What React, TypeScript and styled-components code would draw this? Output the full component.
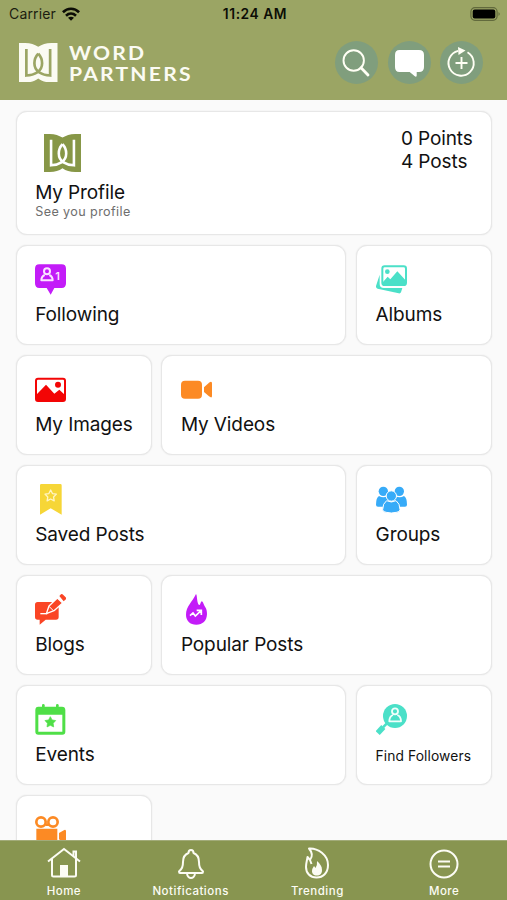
import React from "react";
import styled, { createGlobalStyle } from "styled-components";

const GlobalStyle = createGlobalStyle`
  * { box-sizing: border-box; }
  body { margin: 0; background: #fafafa; font-family: Inter, "Liberation Sans", sans-serif; }
`;

const Screen = styled.div`
  display: flex;
  flex-direction: column;
  width: 507px;
  height: 900px;
  overflow: hidden;
  background: #fafafa;
  color: #111;
`;

const Header = styled.header`
  flex: none;
  height: 99.5px;
  background: #9ba564;
`;

const StatusBar = styled.div`
  display: grid;
  grid-template-columns: 1fr auto 1fr;
  align-items: center;
  height: 27px;
  padding: 0 6px 0 9px;
`;

const Carrier = styled.div`
  display: flex;
  align-items: center;
  gap: 6px;
  font-size: 14px;
  letter-spacing: 0.15px;
  color: #1b1d10;
`;

const Clock = styled.div`
  font-size: 13.8px;
  font-weight: 600;
  letter-spacing: 0.55px;
  color: #0c0d06;
`;

const Battery = styled.svg`
  justify-self: end;
`;

const Toolbar = styled.div`
  display: flex;
  align-items: center;
  height: 71px;
  padding: 0 24px 0 19px;
`;

const Wordmark = styled.div`
  flex: 1;
  margin-left: 11px;
  color: #fbfbf3;
  font-family: Lato, sans-serif;
  font-size: 19px;
  font-weight: 700;
  line-height: 21px;
  letter-spacing: 2px;
  transform: scaleX(1.11);
  transform-origin: left;
`;

const Actions = styled.div`
  display: flex;
  gap: 9.5px;
`;

const RoundButton = styled.button`
  display: grid;
  place-items: center;
  width: 43px;
  height: 43px;
  padding: 0;
  border: 0;
  border-radius: 50%;
  background: #809e7d;
`;

const Content = styled.main`
  flex: 1;
  min-height: 0;
  overflow: hidden;
  display: grid;
  grid-template-columns: 136px 185px 136px;
  grid-template-rows: 124.5px;
  grid-auto-rows: 100px;
  column-gap: 9.7px;
  row-gap: 10px;
  padding: 11.2px 15px 0 15.5px;
`;

const Card = styled.section<{ $span?: number }>`
  grid-column: span ${(p) => p.$span ?? 1};
  display: flex;
  flex-direction: column;
  align-items: flex-start;
  padding: 18px 18.7px 0;
  border: 1px solid #e7e7e7;
  border-radius: 11px;
  box-shadow: 0 0 1.5px #e2e2e2;
  background: #fff;
`;

const Label = styled.div<{ $small?: boolean }>`
  margin-top: ${(p) => (p.$small ? "9px" : "7.5px")};
  font-size: ${(p) => (p.$small ? "13.8px" : "19px")};
  line-height: 24px;
  letter-spacing: ${(p) => (p.$small ? "0.1px" : "-0.1px")};
  white-space: nowrap;
`;

const ProfileCard = styled.section`
  grid-column: span 3;
  display: flex;
  justify-content: space-between;
  padding: 15px 18px 0 18.7px;
  border: 1px solid #e7e7e7;
  border-radius: 11px;
  box-shadow: 0 0 1.5px #e2e2e2;
  background: #fff;
`;

const Profile = styled.div`
  padding-top: 7.5px;
`;

const Avatar = styled.div`
  height: 39px;
  margin-left: 8.5px;
`;

const ProfileName = styled.div`
  margin-top: 7.5px;
  font-size: 19px;
  line-height: 24px;
  letter-spacing: -0.12px;
`;

const Hint = styled.div`
  margin-top: 0.5px;
  font-size: 12.6px;
  line-height: 14px;
  letter-spacing: 0.4px;
  color: #6e6e6e;
`;

const Stats = styled.div`
  width: 72px;
  font-size: 19px;
  line-height: 23.5px;
  letter-spacing: -0.1px;
  white-space: nowrap;
`;

const NavBar = styled.nav`
  flex: none;
  display: grid;
  grid-template-columns: repeat(4, 1fr);
  height: 60.3px;
  border-top: 1px solid #a2ab79;
  background: #889550;
`;

const NavItem = styled.a`
  display: flex;
  flex-direction: column;
  align-items: center;
  padding: 6px 0 0 1px;
  color: #fcfcf4;
  font-size: 11.5px;
  font-weight: 500;
  line-height: 14px;
  letter-spacing: 0.5px;

  svg { margin-bottom: 5px; }
`;

const Tile = styled.svg.attrs({ width: 31, height: 31, viewBox: "0 0 93 93" })`
  display: block;
  flex: none;
`;

const LogoSvg = styled.svg`
  display: block;
`;

const Logo = ({ fill, line, w, h }: { fill: string; line: string; w: number; h: number }) => (
  <LogoSvg width={w} height={h} viewBox="0 0 115 119" preserveAspectRatio="none">
    <path fill={fill} d="M0 0H18C35 0 46 5 57.500 11C69 5 80 0 97 0H115V119H97C80 119 69 115 57.500 107C46 115 35 119 18 119H0Z" />
    <g fill="none" stroke={line} strokeWidth="8">
      <path d="M22 18V98C45 97 69 87 69 61C69 48 63 38 57.500 32" />
      <path d="M93 18V98C70 97 46 87 46 61C46 48 52 38 57.500 32" />
    </g>
  </LogoSvg>
);

const star = (cx: number, cy: number, r: number, inner: number) =>
  Array.from({ length: 10 }, (_, i) => {
    const a = (Math.PI / 5) * i - Math.PI / 2;
    const d = i % 2 ? inner : r;
    return `${(cx + d * Math.cos(a)).toFixed(1)},${(cy + d * Math.sin(a)).toFixed(1)}`;
  }).join(" ");

const FollowingIcon = () => (
  <Tile>
    <path fill="#c31cf8" d="M13 1H80Q93 1 93 14V58Q93 72 80 72H58L47 92L35 72H13Q0 72 0 58V14Q0 1 13 1Z" />
    <g fill="none" stroke="#fbe4ff" strokeWidth="6">
      <circle cx="36" cy="22" r="9" />
      <path strokeLinejoin="round" d="M29 33C22 36 19 42 19 49H53C53 42 50 36 43 33" />
    </g>
    <text x="61" y="48" fill="#fbe4ff" fontFamily="Inter" fontWeight="600" fontSize="33">1</text>
  </Tile>
);

const AlbumsIcon = () => (
  <Tile>
    <path fill="#4be0c8" d="M11 32V60Q11 72 24 72H79L75 85Q73 89 68 88L5 74Q-1 72 0 66Z" />
    <rect x="19" y="7" width="71" height="56" rx="7" fill="#fff" stroke="#4be0c8" strokeWidth="6" />
    <circle cx="34" cy="23" r="7" fill="#4be0c8" />
    <path fill="#4be0c8" d="M21 54L35 38L43 46L64 22L88 48V62H21Z" />
  </Tile>
);

const ImagesIcon = () => (
  <Tile>
    <rect x="3" y="14" width="87" height="67" rx="6" fill="#fff" stroke="#f30505" strokeWidth="6" />
    <circle cx="69" cy="32" r="9" fill="#f30505" />
    <path fill="#f30505" d="M4 62L33 32L58 59L73 47L90 63V80H4Z" />
  </Tile>
);

const VideosIcon = () => (
  <Tile fill="#fc8a24">
    <rect y="20" width="63" height="54" rx="12" />
    <path d="M69 40L84 26Q93 20 93 28V66Q93 74 84 67L69 54Z" />
  </Tile>
);

const SavedIcon = () => (
  <Tile>
    <path fill="#f6d637" d="M19 0H76Q80 0 80 4V92L47 73L15 92V4Q15 0 19 0Z" />
    <polygon points={star(47, 36, 18, 9)} fill="none" stroke="#fff5c4" strokeWidth="4" strokeLinejoin="round" />
  </Tile>
);

const GroupsIcon = () => (
  <Tile fill="#37abf8">
    <circle cx="22" cy="22" r="14" />
    <circle cx="70" cy="22" r="14" />
    <path d="M9 36Q22 44 35 36Q43 42 41 53H29L22 68H6Q0 68 0 62Q0 41 9 36Z" />
    <path d="M84 36Q71 44 58 36Q50 42 52 53H64L71 68H87Q93 68 93 62Q93 41 84 36Z" />
    <g stroke="#fff" strokeWidth="3">
      <circle cx="46" cy="36" r="15.500" />
      <path d="M32 50Q46 58 60 50Q72 58 72 77Q72 84 61 85Q46 89 31 85Q20 84 20 77Q20 58 32 50Z" />
    </g>
  </Tile>
);

const BlogsIcon = () => (
  <Tile>
    <path fill="#fa4525" d="M8 24H64Q71 24 71 32V69Q71 77 63 77H32L14 92V77H8Q0 77 0 69V32Q0 24 8 24Z" />
    <path fill="none" stroke="#fff" strokeWidth="4" d="M16 59H37" />
    <path fill="#fa4525" stroke="#fff" strokeWidth="4" strokeLinejoin="round" d="M67 12L42 36L34 59L57 50L83 27Z" />
    <path fill="none" stroke="#fff" strokeWidth="3" d="M42 37L55 50" />
    <path fill="#fa4525" d="M73 6L78 1Q81 -1 85 3L92 10Q95 14 91 17L86 22Z" />
  </Tile>
);

const PopularIcon = () => (
  <Tile>
    <path fill="#c31cf8" d="M45 0C49 3 47 27 54 33C59 35 58 22 63 22C67 24 69 35 73 40C77 46 78 53 78 61C77 81 65 92 46 92C27 92 15 80 15 62C15 37 34 24 45 0Z" />
    <path fill="none" stroke="#fff" strokeWidth="5" d="M27 65L36 57L43 66L60 50M47 49H61V63" />
  </Tile>
);

const EventsIcon = () => (
  <Tile>
    <g fill="#4fdf47">
      <path fillRule="evenodd" d="M10 8H81Q91 8 91 18V83Q91 92 82 92H10Q1 92 1 83V18Q1 8 10 8ZM10 32V83H82V32Z" />
      <rect x="21" y="0" width="8" height="15" rx="4" />
      <rect x="63" y="0" width="8" height="15" rx="4" />
      <polygon points={star(46, 55, 17, 9)} stroke="#4fdf47" strokeWidth="2" strokeLinejoin="round" />
    </g>
  </Tile>
);

const FindIcon = () => (
  <Tile>
    <circle cx="57" cy="36" r="36" fill="#4be0c8" />
    <path d="M5 87L22 69" stroke="#4be0c8" strokeWidth="17" />
    <path d="M21 70L32 59" stroke="#4be0c8" strokeWidth="8" />
    <g fill="none" stroke="#f1fffc" strokeWidth="5.500">
      <circle cx="57" cy="22" r="9" />
      <path strokeLinejoin="round" d="M51 33C43 36 40 43 40 52H75C75 43 72 36 64 33" />
    </g>
  </Tile>
);

const MoviesIcon = () => (
  <Tile fill="#fc8a24">
    <g fill="none" stroke="#fc8a24" strokeWidth="8">
      <circle cx="18" cy="24" r="14" />
      <circle cx="54" cy="24" r="14" />
    </g>
    <path d="M31 28H42V36H31Z" />
    <path d="M4 44H67V93H4ZM72 57L88 48Q93 46 93 52V90L72 76Z" />
  </Tile>
);

const tiles: { label: string; span?: number; small?: boolean; Icon: React.FC }[] = [
  { label: "Following", span: 2, Icon: FollowingIcon },
  { label: "Albums", Icon: AlbumsIcon },
  { label: "My Images", Icon: ImagesIcon },
  { label: "My Videos", span: 2, Icon: VideosIcon },
  { label: "Saved Posts", span: 2, Icon: SavedIcon },
  { label: "Groups", Icon: GroupsIcon },
  { label: "Blogs", Icon: BlogsIcon },
  { label: "Popular Posts", span: 2, Icon: PopularIcon },
  { label: "Events", span: 2, Icon: EventsIcon },
  { label: "Find Followers", small: true, Icon: FindIcon },
  { label: "", Icon: MoviesIcon },
];

const NavSvg = styled.svg.attrs({ width: 34, height: 32, viewBox: "0 0 34 32", fill: "none", stroke: "currentColor", strokeWidth: 2 })``;

export default function App() {
  return (
    <Screen>
      <GlobalStyle />
      <Header>
        <StatusBar>
          <Carrier>
            Carrier
            <svg width="18" height="14" viewBox="0 0 18 14" fill="none" stroke="#0c0d06" strokeWidth="2.700">
              <path d="M0.900 5.200C5.500 0.600 12.500 0.600 17.100 5.200" />
              <path d="M4 8.700C7 6 11 6 14 8.700" />
              <path fill="#0c0d06" stroke="none" d="M6 10.800Q9 8.500 12 10.800L9 13.800Z" />
            </svg>
          </Carrier>
          <Clock>11:24 AM</Clock>
          <Battery width="31" height="14" viewBox="0 0 31 14">
            <rect x="0.900" y="0.700" width="26.200" height="12.600" rx="4" fill="none" stroke="#626a3d" strokeWidth="1.200" />
            <rect x="2.700" y="2.500" width="22.600" height="9" rx="2" fill="#000" />
            <path d="M28.500 5Q31 7 28.500 9Z" fill="#626a3d" />
          </Battery>
        </StatusBar>
        <Toolbar>
          <Logo fill="#fbfbf3" line="#9ba564" w={38.5} h={39.5} />
          <Wordmark>
            <div>WORD</div>
            <div>PARTNERS</div>
          </Wordmark>
          <Actions>
            <RoundButton aria-label="Search">
              <svg width="43" height="43" viewBox="0 0 43 43" fill="none" stroke="#fffff5">
                <circle cx="18.700" cy="19.500" r="10.200" strokeWidth="1.900" />
                <path d="M26 26.700L33 34" strokeWidth="2.800" strokeLinecap="round" />
              </svg>
            </RoundButton>
            <RoundButton aria-label="Messages">
              <svg width="43" height="43" viewBox="0 0 43 43" fill="#fff">
                <path d="M11.500 9H31Q36 9 36 14V26Q36 31 31 31H28.700V34.500Q28.400 36.600 26.500 35L21.700 31H11.500Q7 31 7 26V14Q7 9 11.500 9Z" />
              </svg>
            </RoundButton>
            <RoundButton aria-label="Add">
              <svg width="43" height="43" viewBox="0 0 43 43" fill="none" stroke="#fffff5" strokeWidth="1.900">
                <path d="M27.500 11.200A12.600 12.600 0 1 1 18.200 9.800" />
                <path d="M21.500 16V28M15.500 22H27.500" />
                <path d="M18 6L25.500 9.500L18.500 14Z" fill="#fffff5" stroke="none" />
              </svg>
            </RoundButton>
          </Actions>
        </Toolbar>
      </Header>

      <Content>
        <ProfileCard>
          <Profile>
            <Avatar><Logo fill="#879747" line="#fff" w={37} h={38} /></Avatar>
            <ProfileName>My Profile</ProfileName>
            <Hint>See you profile</Hint>
          </Profile>
          <Stats>
            <div>0 Points</div>
            <div>4 Posts</div>
          </Stats>
        </ProfileCard>
        {tiles.map(({ label, span, small, Icon }, i) => (
          <Card key={i} $span={span}>
            <Icon />
            {label && <Label $small={small}>{label}</Label>}
          </Card>
        ))}
      </Content>

      <NavBar>
        <NavItem>
          <NavSvg>
            <path d="M1 14.500L17 2L33 14.500" />
            <path d="M5 12V28Q5 29.500 6.500 29.500H27.500Q29 29.500 29 28V12M26.500 9V4.500H29V11" />
            <path d="M13 18H21V30H13Z" fill="currentColor" stroke="none" />
          </NavSvg>
          Home
        </NavItem>
        <NavItem>
          <NavSvg>
            <path strokeLinejoin="round" d="M17 3Q19.500 3 19.500 6Q25 8 25 15C25 20 26 21.500 29 24.500Q29 26 28 26H6Q5 26 5 24.500C8 21.500 9 20 9 15Q9 8 14.500 6Q14.500 3 17 3ZM13 27Q14 31 17 31Q20 31 21 27" />
          </NavSvg>
          Notifications
        </NavItem>
        <NavItem>
          <NavSvg>
            <path strokeLinejoin="round" d="M9 1.500C18 1 28 8 28 18C28 26 23 30.500 16.500 30.500C10 30.500 6 26 6 20C6 16 7 14 7.500 10L10 13C13 9 12 5 9 1.500ZM10 13L11.500 17" />
            <path fill="currentColor" stroke="none" d="M17 14C20 17 22 19 22 23C22 27 20 28.500 17 28.500C13.500 28.500 12 26.500 12 24C12 22 13 20.500 14 19L15.500 21Q17.500 18 17 14Z" />
          </NavSvg>
          Trending
        </NavItem>
        <NavItem>
          <NavSvg>
            <circle cx="17" cy="17" r="13.500" />
            <path d="M11 14.500H23M11 19.500H23" />
          </NavSvg>
          More
        </NavItem>
      </NavBar>
    </Screen>
  );
}
